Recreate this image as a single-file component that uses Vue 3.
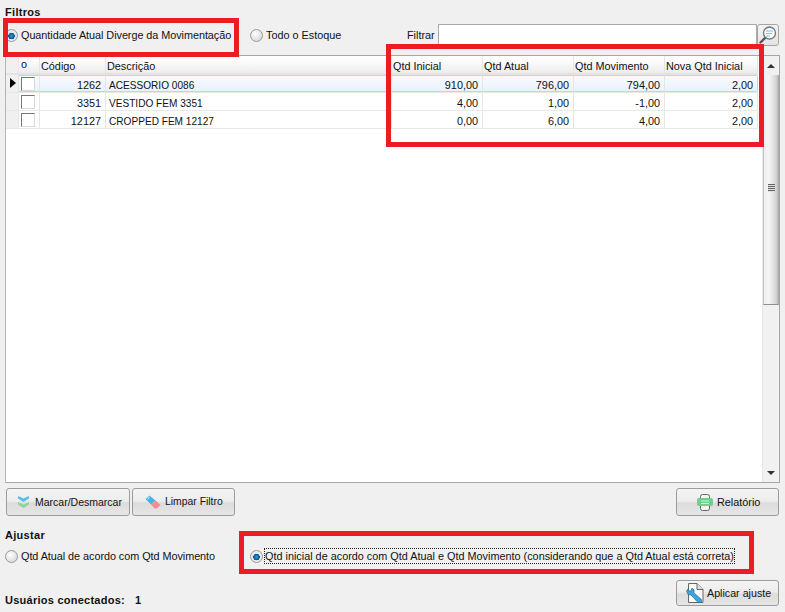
<script setup>
const columns = [
  { label: 'Qtd Inicial' },
  { label: 'Qtd Atual' },
  { label: 'Qtd Movimento' },
  { label: 'Nova Qtd Inicial' }
]
const rows = [
  { code: '1262', name: 'ACESSORIO 0086', values: ['910,00', '796,00', '794,00', '2,00'], current: true },
  { code: '3351', name: 'VESTIDO FEM 3351', values: ['4,00', '1,00', '-1,00', '2,00'] },
  { code: '12127', name: 'CROPPED FEM 12127', values: ['0,00', '6,00', '4,00', '2,00'] }
]
</script>

<template>
  <div class="screen">
    <h2 class="title filtros">Filtros</h2>
    <div class="filters">
      <label class="radio first"><span class="dot on"></span>Quantidade Atual Diverge da Movimentação</label>
      <label class="radio second"><span class="dot"></span>Todo o Estoque</label>
      <span class="filter-label">Filtrar</span>
      <span class="filter-input"></span>
      <button class="search" aria-label="Pesquisar">
        <svg width="20" height="20" viewBox="0 0 20 20">
          <path d="M7.5 12.5 L2.5 17.5" stroke="#555" stroke-width="2.4" stroke-linecap="round" />
          <circle cx="11.5" cy="8" r="6" fill="#fbfdfe" stroke="#777" stroke-width="1.3" />
          <path d="M8 6h7M8 8.5h6M8 11h4" stroke="#6cc4e8" stroke-width="1.2" />
        </svg>
      </button>
    </div>

    <div class="grid-box">
      <div class="table">
        <div class="row head">
          <span class="cell ind"></span>
          <span class="cell chk-h">o</span>
          <span class="cell code">Código</span>
          <span class="cell desc">Descrição</span>
          <span v-for="c in columns" :key="c.label" class="cell num">{{ c.label }}</span>
        </div>
        <div v-for="r in rows" :key="r.code" class="row body" :class="{ current: r.current }">
          <span class="cell ind"><i v-if="r.current" class="pointer"></i></span>
          <span class="cell chk"><i class="box"></i></span>
          <span class="cell code right">{{ r.code }}</span>
          <span class="cell desc">{{ r.name }}</span>
          <span v-for="(v, i) in r.values" :key="i" class="cell num right">{{ v }}</span>
        </div>
      </div>
      <div class="scrollbar">
        <div class="arrow-zone"><i class="arrow up"></i></div>
        <div class="thumb"><i class="grip"></i></div>
        <div class="track"><i class="arrow down"></i></div>
      </div>
    </div>

    <div class="actions">
      <button class="btn marcar">
        <svg width="11" height="12" viewBox="0 0 11 12">
          <path d="M0 0 L5.5 2.5 L11 0 V2.5 L5.5 6 L0 2.5 Z" fill="#58bde8" />
          <path d="M0 6 L5.5 8.5 L11 6 V8.5 L5.5 12 L0 8.5 Z" fill="#8ed59b" />
        </svg>
        Marcar/Desmarcar
      </button>
      <button class="btn limpar">
        <svg width="16" height="14" viewBox="0 0 16 14">
          <path d="M0.5 4 L4.5 0.5 L10.5 5.5 L6 9.5 Z" fill="#48b4e6" />
          <path d="M6 9.5 L10.5 5.5 L15.5 10 L12 13.5 H9.5 Z" fill="#f28d95" />
          <path d="M2.5 4 L4.7 2" stroke="#fff" stroke-width="1" />
        </svg>
        Limpar Filtro
      </button>
      <button class="btn relatorio">
        <svg width="16" height="17" viewBox="0 0 16 17">
          <rect x="3.5" y="0.5" width="9" height="16" rx="2" fill="#f3f3f3" stroke="#666" />
          <rect x="0" y="4" width="16" height="8" rx="2" fill="#6fcf8c" />
          <path d="M4 7h8M4 9.5h8" stroke="#d9f5e0" stroke-width="1" />
        </svg>
        Relatório
      </button>
    </div>

    <h2 class="title ajustar">Ajustar</h2>
    <div class="adjust">
      <label class="radio opt-a"><span class="dot"></span>Qtd Atual de acordo com Qtd Movimento</label>
      <label class="radio opt-b"><span class="dot on"></span><span class="focus">Qtd inicial de acordo com Qtd Atual e Qtd Movimento (considerando que a Qtd Atual está correta)</span></label>
    </div>

    <div class="footer">
      <span class="users">Usuários conectados:<b>1</b></span>
      <button class="btn aplicar">
        <svg width="18" height="20" viewBox="0 0 18 20">
          <path d="M2.5 0.5 H11 L17 6.5 V19.5 H2.5 Z" fill="#fafafa" stroke="#666" />
          <path d="M11 0.5 V6.5 H17" fill="#ddd" stroke="#666" />
          <path d="M2 6 L0.5 8 L2 11.5 L5 12 L12 19.5 L15.5 19.5 L15.5 16.5 L8 10 L8 7 L6 5 L5 8 L3 8 Z" fill="#3da4dc" stroke="#1e6f9f" stroke-width=".7" />
        </svg>
        Aplicar ajuste
      </button>
    </div>

    <i class="mark mark-a"></i>
    <i class="mark mark-b"></i>
    <i class="mark mark-c"></i>
  </div>
</template>

<style>
html, body { margin: 0; background: #f0f0f0; }
</style>

<style scoped>
.screen {
  position: relative;
  width: 785px;
  height: 612px;
  overflow: hidden;
  background: #f0f0f0;
  color: #111;
  font-family: "Liberation Sans", Tahoma, sans-serif;
  font-size: 10.85px;
  line-height: 14px;
  box-sizing: border-box;
}
.title { margin: 0; padding-left: 5px; font-size: 11px; font-weight: 700; line-height: 14px; letter-spacing: 0.3px; }
.filtros { padding-top: 5px; }
.filters { display: flex; align-items: center; height: 22px; margin-top: 5px; }
.radio { display: flex; align-items: center; white-space: nowrap; }
.first { margin-left: 5px; width: 245px; letter-spacing: -0.05px; }
.second { width: 157px; }
.dot {
  width: 11px; height: 11px; margin-right: 3px; flex: none; border-radius: 50%;
  border: 1px solid #9a9a9a;
  background: radial-gradient(circle at 40% 35%, #fff, #d8d8d8 80%);
}
.dot.on {
  background: radial-gradient(circle at 50% 55%, #2f9fe0 0, #0c4f88 38%, #dfe6ea 42%, #f2f2f2 100%);
}
.filter-label { width: 31px; }
.filter-input { width: 317px; height: 21px; background: #fff; border: 1px solid #aaa; border-bottom: 0; box-sizing: content-box; }
.search {
  width: 22px; height: 22px; padding: 0; display: flex; align-items: center; justify-content: center;
  border: 1px solid #a5a5a5; border-radius: 3px; background: linear-gradient(#f5f5f5, #e4e4e4);
}
.grid-box {
  display: flex; width: 775px; height: 428px; margin: 9px 0 0 5px; box-sizing: border-box;
  background: #fff; border: 1px solid #a6a6a6; border-left-color: #b5b5b5;
}
.table { width: 752px; flex: none; }
.row { display: grid; grid-template-columns: 13px 21px 66px 286px 91px 91px 91px 93px; }
.head { height: 19px; background: linear-gradient(#fff 0, #fafafa 40%, #ececec 100%); border-bottom: 2px solid #e3e3e3; box-sizing: border-box; }
.body { height: 18px; border-bottom: 1px solid #e8e8e8; box-sizing: border-box; }
.body.current .cell:not(.ind) { background: linear-gradient(#f8fbfe, #e9f2fb); border-top: 1px solid #b9d7f5; border-bottom: 1px solid #b9d7f5; }
.body.current .cell:last-child { border-right: 1px solid #b9d7f5; border-radius: 0 2px 2px 0; }
.cell { display: block; padding: 0 1px; border-right: 1px solid #e6e6e6; line-height: 20px; overflow: hidden; white-space: nowrap; box-sizing: border-box; }
.body.current .cell { line-height: 18px; }
.head .cell { line-height: 20px; }
.right { text-align: right; padding-right: 4px; }
.body .desc { padding-left: 3px; font-size: 10.1px; line-height: 22px; }
.body.current .desc { line-height: 20px; }
.head .chk-h { padding-left: 2px; line-height: 17px; }
.ind { background: #f0f0f0; position: relative; padding: 0; }
.chk { padding: 2px 0 0 2px; }
.body.current .chk { padding-top: 1px; }
.box {
  display: block; width: 14px; height: 14px; box-sizing: border-box;
  border: 1px solid #d8d8d8; border-top-color: #777; border-left-color: #777; background: #fff;
}
.pointer {
  position: absolute; left: 4px; top: 3px; width: 0; height: 0;
  border-left: 6px solid #000; border-top: 5px solid transparent; border-bottom: 5px solid transparent;
}
.scrollbar { width: 16px; margin-left: 4px; display: flex; flex-direction: column; background: #f0f0f0; border-left: 1px solid #e8e8e8; }
.arrow-zone { height: 19px; display: flex; align-items: center; justify-content: center; background: #f1f1f1; }
.arrow { width: 0; height: 0; display: block; border-left: 4px solid transparent; border-right: 4px solid transparent; }
.arrow.up { border-bottom: 4px solid #333; }
.arrow.down { border-top: 4px solid #333; }
.thumb {
  height: 230px; display: flex; align-items: center; justify-content: center;
  background: linear-gradient(90deg, #eee, #f6f6f6 35%, #d6d6d6 85%, #bbb);
  border-bottom: 1px solid #8e8e8e; border-left: 1px solid #c5c5c5; border-right: 1px solid #aaa; box-sizing: border-box;
}
.grip { width: 7px; height: 8px; margin-top: -3px; background: repeating-linear-gradient(#666 0 1px, #ddd 1px 2px); }
.track { flex: 1; display: flex; align-items: flex-end; justify-content: center; padding-bottom: 7px; background: #f1f1f1; }
.actions { display: flex; height: 28px; margin: 5px 6px 0 6px; }
.btn {
  display: flex; align-items: center; height: 28px; padding: 0; box-sizing: border-box;
  border: 1px solid #9c9c9c; border-radius: 3px;
  background: linear-gradient(#f4f4f4 0, #ededed 45%, #dcdcdc 55%, #e6e6e6 100%);
  font: inherit; color: #111;
}
.marcar { width: 124px; padding-left: 11px; gap: 6px; font-size: 10.5px; }
.limpar { width: 103px; margin-left: 2px; padding-left: 12px; gap: 4px; font-size: 10.4px; }
.relatorio { width: 103px; margin-left: auto; padding-left: 20px; gap: 4px; }
.ajustar { margin-top: 12px; }
.adjust { display: flex; align-items: center; height: 22px; margin-top: 3px; }
.opt-a { margin-left: 5px; width: 245px; letter-spacing: -0.05px; }
.opt-b .dot { margin-right: 2px; }
.focus { outline: 1px dotted #222; outline-offset: 0; }
.footer { display: flex; align-items: center; justify-content: space-between; margin: 13px 6px 0 5px; height: 26px; }
.users { font-size: 11px; font-weight: 700; padding-top: 14px; letter-spacing: 0.25px; }
.users b { margin-left: 10px; }
.aplicar { width: 103px; height: 26px; padding-left: 9px; gap: 3px; font-size: 10.7px; }
.mark { position: absolute; border: 5px solid #ed1c24; box-sizing: border-box; pointer-events: none; }
.mark-a { left: 3px; top: 18px; width: 236px; height: 39px; }
.mark-b { left: 386px; top: 44px; width: 378px; height: 103px; }
.mark-c { left: 239px; top: 531px; width: 515px; height: 43px; }
</style>
